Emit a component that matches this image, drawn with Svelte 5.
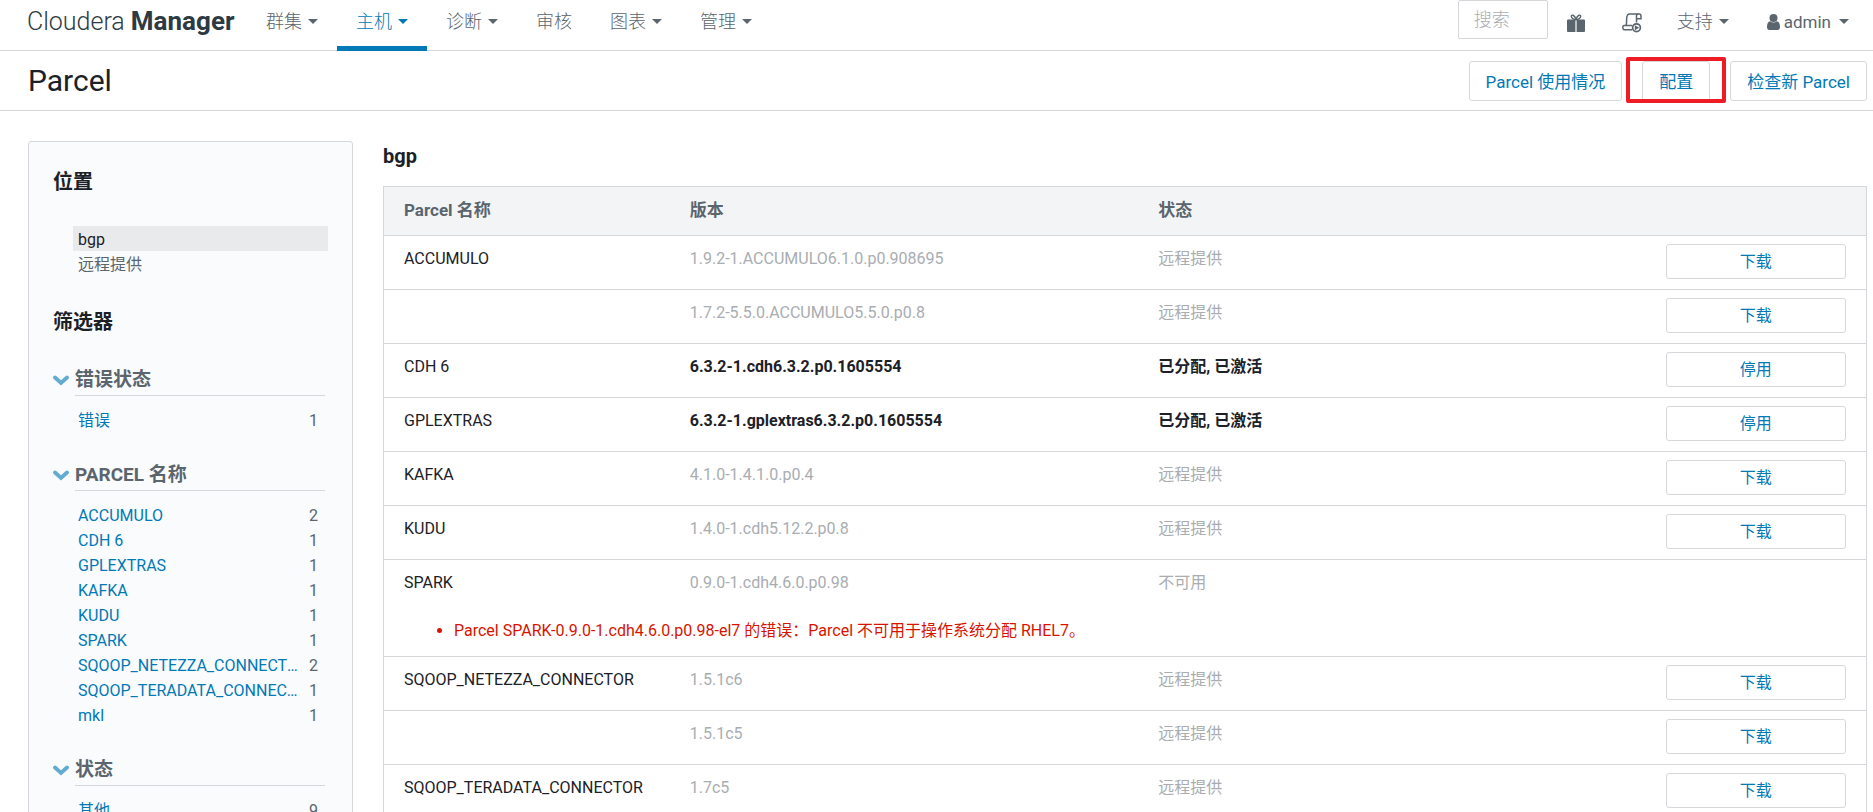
<script>
  const navItems = [
    { label: '群集', menu: true },
    { label: '主机', menu: true, active: true },
    { label: '诊断', menu: true },
    { label: '审核', menu: false },
    { label: '图表', menu: true },
    { label: '管理', menu: true }
  ];

  const groups = [
    { title: '错误状态', items: [['错误', 1]] },
    {
      title: 'PARCEL 名称',
      items: [
        ['ACCUMULO', 2],
        ['CDH 6', 1],
        ['GPLEXTRAS', 1],
        ['KAFKA', 1],
        ['KUDU', 1],
        ['SPARK', 1],
        ['SQOOP_NETEZZA_CONNECTOR', 2],
        ['SQOOP_TERADATA_CONNECTOR', 1],
        ['mkl', 1]
      ]
    },
    { title: '状态', items: [['其他', 9]] }
  ];

  const parcels = [
    { name: 'ACCUMULO', version: '1.9.2-1.ACCUMULO6.1.0.p0.908695', status: '远程提供', action: '下载' },
    { name: '', version: '1.7.2-5.5.0.ACCUMULO5.5.0.p0.8', status: '远程提供', action: '下载' },
    { name: 'CDH 6', version: '6.3.2-1.cdh6.3.2.p0.1605554', status: '已分配, 已激活', action: '停用', active: true },
    { name: 'GPLEXTRAS', version: '6.3.2-1.gplextras6.3.2.p0.1605554', status: '已分配, 已激活', action: '停用', active: true },
    { name: 'KAFKA', version: '4.1.0-1.4.1.0.p0.4', status: '远程提供', action: '下载' },
    { name: 'KUDU', version: '1.4.0-1.cdh5.12.2.p0.8', status: '远程提供', action: '下载' },
    {
      name: 'SPARK',
      version: '0.9.0-1.cdh4.6.0.p0.98',
      status: '不可用',
      error: 'Parcel SPARK-0.9.0-1.cdh4.6.0.p0.98-el7 的错误：Parcel 不可用于操作系统分配 RHEL7。'
    },
    { name: 'SQOOP_NETEZZA_CONNECTOR', version: '1.5.1c6', status: '远程提供', action: '下载' },
    { name: '', version: '1.5.1c5', status: '远程提供', action: '下载' },
    { name: 'SQOOP_TERADATA_CONNECTOR', version: '1.7c5', status: '远程提供', action: '下载' }
  ];
</script>

<div class="page">
  <header class="topbar">
    <a class="brand" href="#home">Cloudera <strong>Manager</strong></a>
    <nav class="nav">
      {#each navItems as item}
        <a href="#nav" class="nav-item" class:active={item.active}>
          {item.label}{#if item.menu}<span class="caret"></span>{/if}
        </a>
      {/each}
    </nav>
    <div class="tools">
      <input class="search" type="text" placeholder="搜索" aria-label="搜索" />
      <a class="icon gift" href="#parcels" aria-label="Parcel">
        <svg width="18" height="18" viewBox="0 0 18 18">
          <path d="M0 6.5Q0 5.5 1 5.5H8.4V18H1Q0 18 0 17ZM9.6 5.5H17Q18 5.5 18 6.5V17Q18 18 17 18H9.600Z" fill="#5a656d" />
          <path d="M9 5.500C7.500 5.500 4.300 4.600 4.300 2.600C4.300 .3 7.400 .4 9 5.300C10.600 .4 13.700 .3 13.700 2.600C13.700 4.600 10.500 5.500 9 5.500Z" fill="none" stroke="#5a656d" stroke-width="1.4" />
        </svg>
      </a>
      <a class="icon commands" href="#commands" aria-label="运行中的命令">
        <svg width="20" height="20" viewBox="0 0 20 20" fill="none" stroke="#5a656d" stroke-width="1.500">
          <path d="M4.200 12.300C4.800 10 4.400 8 4.700 5C4.900 2.500 5.700 1 7.500 1H17.200Q19 1 19 3V5.700H14.500" />
          <path d="M14.500 9.500V3Q14.500 1 16.200 1" />
          <path d="M10 12.500H2.200Q.8 12.500 .8 14.500T2.500 16.700H10" />
          <circle cx="14.500" cy="14.700" r="3.900" stroke-width="1.700" />
          <path d="M12.800 12.200L17.200 14.700L12.800 17.200Z" fill="#5a656d" stroke="none" />
        </svg>
      </a>
      <a class="nav-item" href="#support">支持<span class="caret"></span></a>
      <a class="nav-item user" href="#account">
        <svg width="13" height="16" viewBox="0 0 13 16" fill="#5a656d">
          <circle cx="6.500" cy="4" r="4" />
          <path d="M3.200 7.200C1 7.600 0 9.800 0 13Q0 16 2.600 16H10.400Q13 16 13 13C13 9.800 12 7.600 9.800 7.200Q6.500 9.900 3.200 7.200Z" />
        </svg>
        <span>admin</span><span class="caret"></span>
      </a>
    </div>
  </header>

  <div class="titlebar">
    <h1>Parcel</h1>
    <div class="actions">
      <button class="btn">Parcel 使用情况</button>
      <span class="marked"><button class="btn">配置</button></span>
      <button class="btn">检查新 Parcel</button>
    </div>
  </div>

  <div class="content">
    <aside class="sidebar">
      <h2>位置</h2>
      <ul class="places">
        <li><a class="current" href="#bgp">bgp</a></li>
        <li><a href="#remote">远程提供</a></li>
      </ul>
      <h2>筛选器</h2>
      {#each groups as group}
        <section class="group">
          <svg class="chevron" width="16" height="11" viewBox="0 0 16 11">
            <path d="M2 2.500L8 8L14 2.500" fill="none" stroke="#63abd0" stroke-width="3.800" stroke-linecap="round" />
          </svg>
          <div class="group-body">
            <h3>{group.title}</h3>
            <ul>
              {#each group.items as [label, count]}
                <li><a href="#filter">{label}</a><span>{count}</span></li>
              {/each}
            </ul>
          </div>
        </section>
      {/each}
    </aside>

    <main>
      <h2>bgp</h2>
      <table>
        <colgroup>
          <col class="c-name" /><col class="c-version" /><col /><col class="c-action" />
        </colgroup>
        <thead>
          <tr><th>Parcel 名称</th><th>版本</th><th>状态</th><th></th></tr>
        </thead>
        <tbody>
          {#each parcels as p}
            <tr class:active={p.active} class:open={p.error}>
              <td>{p.name}</td>
              <td class="muted">{p.version}</td>
              <td class="muted">{p.status}</td>
              <td class="action">{#if p.action}<button class="btn small">{p.action}</button>{/if}</td>
            </tr>
            {#if p.error}
              <tr class="error">
                <td colspan="4"><ul><li>{p.error}</li></ul></td>
              </tr>
            {/if}
          {/each}
        </tbody>
      </table>
    </main>
  </div>
</div>

<style>
  :global(body) {
    margin: 0;
    background: #fff;
  }
  :global(html) {
    overflow: hidden;
  }
  .page {
    height: 100vh;
    overflow: hidden;
    font-family: Roboto, "Noto Sans CJK SC", sans-serif;
    font-size: 16px;
    line-height: 24px;
    color: #1b2127;
  }
  a {
    color: #0079b6;
    text-decoration: none;
  }
  ul {
    list-style: none;
    margin: 0;
    padding: 0;
  }
  h1, h2, h3 {
    margin: 0;
  }
  .topbar {
    display: flex;
    height: 50px;
    border-bottom: 1px solid #d5d7da;
  }
  .brand {
    width: 220px;
    padding-left: 27px;
    font-size: 25px;
    line-height: 42px;
    font-weight: 300;
    color: #2e3a43;
    white-space: nowrap;
  }
  .brand strong {
    font-size: 26px;
    font-weight: 700;
  }
  .nav {
    display: flex;
  }
  .nav-item {
    display: flex;
    align-items: center;
    height: 46px;
    padding: 0 19px 3px;
    box-sizing: border-box;
    font-size: 18px;
    font-weight: 300;
    color: #5a656d;
    white-space: nowrap;
  }
  .nav-item.active {
    color: #0079b6;
    border-bottom: 5px solid #0079b6;
    height: 51px;
  }
  .caret {
    margin-left: 6px;
    border: solid transparent;
    border-width: 5px 5px 0;
    border-top-color: currentColor;
  }
  .tools {
    display: flex;
    margin-left: auto;
    padding-right: 5px;
  }
  .search {
    width: 90px;
    height: 39px;
    box-sizing: border-box;
    padding: 0 15px;
    border: 1px solid #d5d7da;
    border-radius: 2px;
    font: 300 18px/24px Roboto, "Noto Sans CJK SC", sans-serif;
    color: #1b2127;
  }
  .search::placeholder {
    color: #a9adb1;
  }
  .icon {
    display: flex;
    align-items: center;
    height: 45px;
  }
  .gift {
    padding: 0 18px 0 19px;
  }
  .commands {
    padding: 0 16px 0 19px;
  }
  .user {
    font-weight: 400;
    gap: 4px;
    font-size: 17px;
  }
  .user .caret {
    margin-left: 4px;
  }
  .titlebar {
    display: flex;
    align-items: center;
    justify-content: space-between;
    height: 59px;
    padding: 0 6px 0 28px;
    border-bottom: 1px solid #d5d7da;
  }
  h1 {
    font-size: 30px;
    line-height: 40px;
    font-weight: 400;
  }
  .actions {
    display: flex;
    gap: 20px;
  }
  .btn {
    height: 40px;
    padding: 0 16px;
    border: 1px solid #d5d7da;
    border-radius: 3px;
    background: #fff;
    font-family: inherit;
    font-size: 17px;
    color: #0079b6;
    white-space: nowrap;
  }
  .marked {
    position: relative;
  }
  .marked::after {
    content: "";
    position: absolute;
    inset: -4px -16px -2px;
    border: 4px solid #ee1c24;
    border-radius: 2px;
    pointer-events: none;
  }
  .content {
    display: flex;
    gap: 30px;
    padding: 30px 6px 0 28px;
  }
  .sidebar {
    flex: none;
    width: 325px;
    min-height: 700px;
    box-sizing: border-box;
    padding: 25px 24px 0;
    border: 1px solid #d5d7da;
    border-radius: 3px 3px 0 0;
    background: #fafbfd;
  }
  h2 {
    font-size: 20px;
    line-height: 31px;
    font-weight: 700;
  }
  .places {
    margin: 28px 0 31px 20px;
  }
  .places a {
    display: block;
    padding: 3px 5px 0;
    line-height: 22px;
    color: #5a656d;
  }
  .places .current {
    background: #e9eaec;
    color: #1b2127;
  }
  .group {
    display: flex;
    gap: 6px;
    margin-top: 31px;
  }
  .chevron {
    flex: none;
    margin-top: 6px;
  }
  .group-body {
    flex: 1;
    min-width: 0;
    padding-right: 3px;
  }
  h3 {
    font-size: 19px;
    line-height: 22px;
    font-weight: 700;
    color: #5a656d;
    padding-bottom: 4px;
    border-bottom: 1px solid #d5d7da;
  }
  .group ul {
    padding: 12px 7px 0 3px;
  }
  .group li {
    display: flex;
    justify-content: space-between;
    line-height: 25px;
    color: #5a656d;
  }
  .group li a {
    max-width: 226px;
    overflow: hidden;
    text-overflow: ellipsis;
    white-space: nowrap;
  }
  main {
    flex: 1;
    min-width: 0;
  }
  table {
    width: 100%;
    margin-top: 14px;
    table-layout: fixed;
    border-collapse: collapse;
    border: 1px solid #d5d7da;
  }
  .c-name {
    width: 19.3%;
  }
  .c-version {
    width: 31.6%;
  }
  .c-action {
    width: 221px;
  }
  th {
    padding: 0 20px 2px;
    height: 46px;
    background: #f3f4f6;
    font-size: 17px;
    font-weight: 700;
    text-align: left;
    color: #5a656d;
  }
  tr {
    border-bottom: 1px solid #d5d7da;
  }
  td {
    height: 42px;
    padding: 11px 20px 0;
    vertical-align: top;
  }
  .muted {
    color: #a9adb1;
  }
  .active .muted {
    color: #1b2127;
    font-weight: 700;
  }
  .action {
    padding-top: 8px;
    height: 45px;
  }
  .small {
    display: block;
    width: 100%;
    height: 35px;
    padding-bottom: 3px;
    font-size: 16px;
  }
  .open {
    border-bottom: 0;
  }
  .error td {
    height: 37px;
    padding-top: 6px;
    color: #d81400;
  }
  .error ul {
    list-style: disc;
    padding-left: 50px;
  }
</style>
